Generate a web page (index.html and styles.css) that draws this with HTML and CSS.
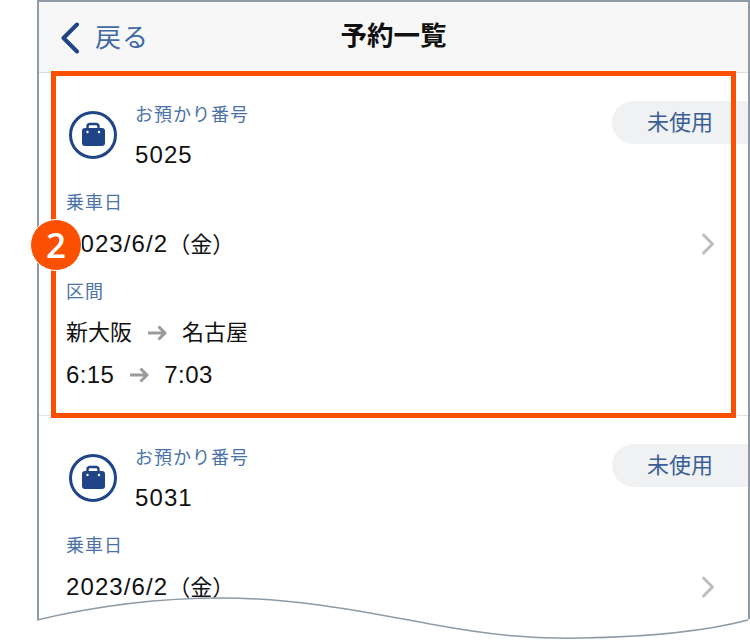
FILE: index.html
```html
<!DOCTYPE html>
<html lang="ja">
<head>
    <meta charset="UTF-8">
    <title>予約一覧</title>
    <link rel="stylesheet" href="styles.css">
</head>
<body>
    <div class="phone">
        <header class="nav">
            <a class="nav-back">
                <svg class="nav-chevron" width="20" height="32" viewBox="0 0 20 32"><path d="M17 2.5 3.5 16 17 29.5"/></svg>
                <span class="nav-back-text">戻る</span>
            </a>
            <h1 class="nav-title">予約一覧</h1>
        </header>

        <section class="booking">
            <div class="booking-head">
                <svg class="bag-icon" width="48" height="48" viewBox="0 0 48 48">
                    <circle class="bag-ring" cx="24" cy="24" r="22.5"/>
                    <path class="bag-handle" d="M18.5 18v-2.5a2.5 2.5 0 0 1 2.5-2.5h6a2.5 2.5 0 0 1 2.5 2.5V18"/>
                    <rect class="bag-body" x="13" y="17" width="23" height="18" rx="3"/>
                    <circle class="bag-dot" cx="18.5" cy="21" r="1.2"/>
                    <circle class="bag-dot" cx="30" cy="21" r="1.2"/>
                </svg>
                <div class="booking-no">
                    <div class="label">お預かり番号</div>
                    <div class="value">5025</div>
                </div>
                <div class="status">未使用</div>
            </div>
            <div class="label label-date">乗車日</div>
            <div class="value date-row">
                <span>2023/6/2<span class="station">（金）</span></span>
                <svg class="row-chevron" width="14" height="24" viewBox="0 0 14 24"><path d="M2.5 3 11.5 12 2.5 21"/></svg>
            </div>
            <div class="label label-route">区間</div>
            <div class="value route"><span class="station">新大阪</span><svg class="arrow" width="20" height="16" viewBox="0 0 20 16"><path d="M1 8H18M11.5 1.5 18 8 11.5 14.5"/></svg><span class="station">名古屋</span></div>
            <div class="value route route-time">6:15<svg class="arrow" width="20" height="16" viewBox="0 0 20 16"><path d="M1 8H18M11.5 1.5 18 8 11.5 14.5"/></svg>7:03</div>
        </section>

        <section class="booking">
            <div class="booking-head">
                <svg class="bag-icon" width="48" height="48" viewBox="0 0 48 48">
                    <circle class="bag-ring" cx="24" cy="24" r="22.5"/>
                    <path class="bag-handle" d="M18.5 18v-2.5a2.5 2.5 0 0 1 2.5-2.5h6a2.5 2.5 0 0 1 2.5 2.5V18"/>
                    <rect class="bag-body" x="13" y="17" width="23" height="18" rx="3"/>
                    <circle class="bag-dot" cx="18.5" cy="21" r="1.2"/>
                    <circle class="bag-dot" cx="30" cy="21" r="1.2"/>
                </svg>
                <div class="booking-no">
                    <div class="label">お預かり番号</div>
                    <div class="value">5031</div>
                </div>
                <div class="status">未使用</div>
            </div>
            <div class="label label-date">乗車日</div>
            <div class="value date-row">
                <span>2023/6/2<span class="station">（金）</span></span>
                <svg class="row-chevron" width="14" height="24" viewBox="0 0 14 24"><path d="M2.5 3 11.5 12 2.5 21"/></svg>
            </div>
        </section>
    </div>

    <!-- callout over the first booking -->
    <div class="highlight"></div>
    <div class="callout">2</div>

    <!-- torn edge at the bottom of the phone -->
    <svg class="tear" width="750" height="50" viewBox="0 0 750 50">
        <path class="tear-fill" d="M37 30C100 15 160 8 222 8C300 8 370 23 430 34C490 45 530 49 580 48C650 47 710 40 750 29V50H37Z"/>
        <path class="tear-line" d="M37 30C100 15 160 8 222 8C300 8 370 23 430 34C490 45 530 49 580 48C650 47 710 40 748 30"/>
    </svg>
</body>
</html>
```

FILE: styles.css
```css
html, body {
    margin: 0;
    padding: 0;
    background-color: #fff;
}
body {
    position: relative;
    width: 750px;
    height: 640px;
    overflow: hidden;
    font-family: "Liberation Sans", "Noto Sans CJK JP", sans-serif;
    color: #111;
}
.phone {
    box-sizing: border-box;
    width: 713px;
    height: 640px;
    margin-left: 37px;
    border: 2px solid #8e9aa6;
    border-bottom: 0;
    overflow: hidden;
}

/* nav bar */
.nav {
    position: relative;
    display: flex;
    align-items: center;
    justify-content: center;
    height: 70px;
    background-color: #f7f7f7;
    border-bottom: 1px solid #dcdcdc;
}
.nav-back {
    position: absolute;
    left: 21px;
    top: 17px;
    display: flex;
    align-items: center;
    gap: 15px;
    font-family: "Noto Sans CJK JP", sans-serif;
    font-size: 26px;
    line-height: 34px;
    color: #3f6aa3;
}
.nav-back-text {
    margin-bottom: 4px;
    letter-spacing: 1px;
}
.nav-chevron path {
    fill: none;
    stroke: #1f4488;
    stroke-width: 4;
    stroke-linecap: round;
    stroke-linejoin: round;
}
.nav-title {
    margin: 0 0 7px;
    font-family: "Noto Sans CJK JP", sans-serif;
    font-size: 26.5px;
    font-weight: 700;
    color: #111;
}

/* booking rows */
.booking {
    padding: 23px 0 0 27px;
    height: 343px;
    box-sizing: border-box;
    border-bottom: 1px solid #e2e2e2;
    background-color: #fff;
}
.booking-head {
    display: flex;
    align-items: flex-start;
}
.bag-icon {
    flex: none;
    margin: 15px 18px 0 3px;
}
.bag-ring {
    fill: none;
    stroke: #1f4488;
    stroke-width: 3;
}
.bag-handle {
    fill: none;
    stroke: #1f4488;
    stroke-width: 2.4;
}
.bag-body {
    fill: #1f4488;
}
.bag-dot {
    fill: #fff;
}
.booking-no {
    flex: 1;
}
.booking-no .label {
    height: 35px;
}
.label {
    height: 34px;
    font-family: "Noto Sans CJK JP", sans-serif;
    font-size: 18px;
    letter-spacing: 1px;
    line-height: 34px;
    color: #4a72a8;
}
.value {
    height: 48px;
    margin-bottom: 2px;
    font-family: "Liberation Sans", "Noto Sans CJK JP", sans-serif;
    font-size: 24px;
    letter-spacing: 1.1px;
    line-height: 48px;
    color: #111;
}
.label-date {
    margin: 3px 0 2px;
}
.label-route {
    margin: 5px 0 5px;
}
.status {
    flex: none;
    box-sizing: border-box;
    width: 136px;
    height: 43px;
    margin-top: 5px;
    padding-left: 35px;
    border-radius: 22px 0 0 22px;
    background-color: #f0f1f3;
    font-family: "Noto Sans CJK JP", sans-serif;
    font-size: 22px;
    line-height: 38px;
    color: #3a5f98;
}
.date-row {
    display: flex;
    align-items: center;
    justify-content: space-between;
    padding-right: 33px;
}
.row-chevron path {
    fill: none;
    stroke: #bdbdbd;
    stroke-width: 3;
    stroke-linecap: round;
    stroke-linejoin: round;
}
.route {
    display: flex;
    align-items: center;
    height: 42px;
    margin-bottom: 0;
    line-height: 42px;
}
.route-time {
    letter-spacing: 0.4px;
}
.station {
    font-size: 22px;
    letter-spacing: 0;
}
.arrow {
    margin: 0 15px;
}
.arrow path {
    fill: none;
    stroke: #9b9b9b;
    stroke-width: 3;
}

/* overlays */
.highlight {
    position: absolute;
    left: 51px;
    top: 71px;
    box-sizing: border-box;
    width: 685px;
    height: 347px;
    border: 5px solid #fa5000;
}
.callout {
    position: absolute;
    left: 30px;
    top: 219px;
    box-sizing: border-box;
    width: 52px;
    height: 52px;
    border: 1px solid #fff;
    border-radius: 50%;
    background-color: #fa5000;
    color: #fff;
    font-family: "Open Sans", sans-serif;
    font-size: 35px;
    font-weight: 600;
    line-height: 50px;
    text-align: center;
}
.tear {
    position: absolute;
    left: 0;
    top: 590px;
}
.tear-fill {
    fill: #fff;
}
.tear-line {
    fill: none;
    stroke: #8e9aa6;
    stroke-width: 1.5;
}
```
